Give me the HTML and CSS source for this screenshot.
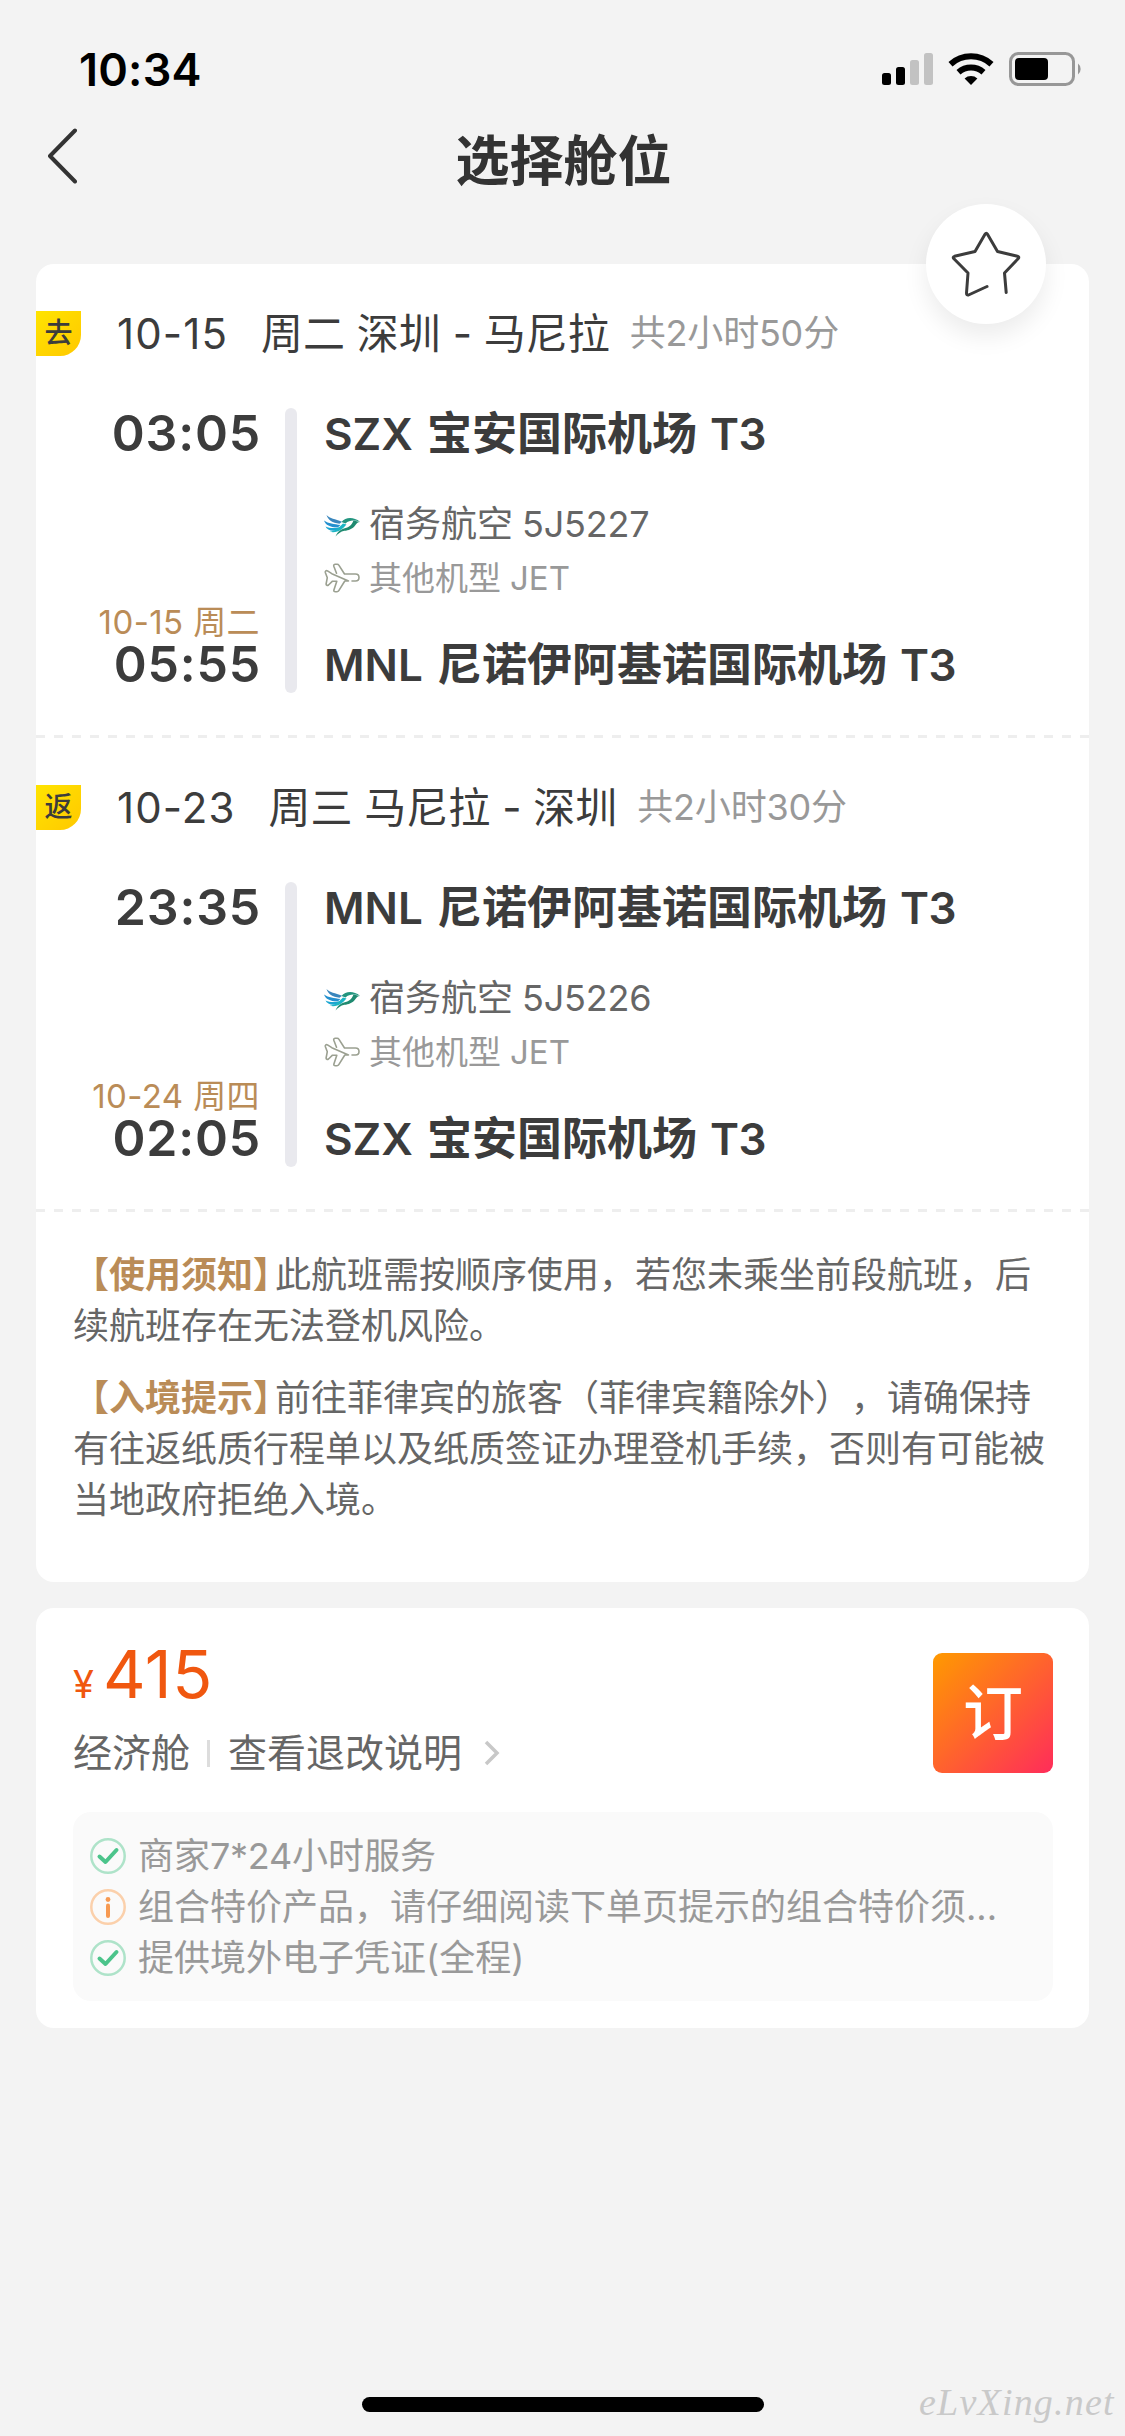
FILE: index.html
```html
<!DOCTYPE html>
<html lang="zh-CN">
<head>
<meta charset="utf-8">
<title>选择舱位</title>
<link rel="stylesheet" href="styles.css">
</head>
<body>
<svg width="0" height="0" class="sprite" aria-hidden="true">
  <symbol id="bird" viewBox="0 0 36 22">
    <path d="M2.500 0C6 3.500 11 4 18 6.800L15.500 8.800C8.500 7.800 4 5 2.500 0Z" fill="#3a86bd"/>
    <path d="M0 5.500C4.500 8.800 10 9 16.500 10L14 12.300C7 12.600 1.500 10.300 0 5.500Z" fill="#2490cf"/>
    <path d="M1.500 11.500C6 13.500 10.500 13.500 16 12.300L12.500 15.300C7.500 16.500 3 15 1.500 11.500Z" fill="#1ba6d2"/>
    <path d="M5.500 16.800C11 16.200 15 12.500 19 8.500L22.500 9.500C19 13.800 13.500 18.800 5.500 16.800Z" fill="#1cb5c4"/>
    <path d="M11.500 21.500C13.500 16 18 13.500 22.500 12.700C26.500 11.500 28 9 29.500 5.500L36 7C33.500 7.200 32.500 8.500 31.500 10C28.500 14.200 24.500 15.500 20.500 15.800C16.500 16.500 14 19 11.500 21.500Z" fill="#1f8a70"/>
    <path d="M17.500 7C21.500 2 29.500 1.500 36 6.800C30 5 25.500 5 21.500 8.500Z" fill="#23957f"/>
  </symbol>
  <symbol id="plane" viewBox="0 0 36 30">
    <path d="M12.500 10.200 9.800 3.200C9.400 1.800 10.200 1.300 11.200 1.300H13.200C14 1.300 14.500 1.700 15 2.400L20.500 11H31.500C34 11 35 12.800 35 14.500C35 16.500 33.800 18 31.500 18H28M24.500 18H20.800L14.800 27.700C14.300 28.500 13.800 28.700 13 28.700H11.300C10.200 28.700 9.500 28.200 9.900 27L12.800 18.200H8.500L4.500 22C3.300 22.800 2 22.300 2.100 21L3.300 14.700 1.300 9.500C1 8 2.200 7.300 3.500 7.900L7.800 10.700Z" fill="none" stroke="#9ba091" stroke-width="1.600" stroke-linejoin="round" stroke-linecap="round"/>
  </symbol>
  <symbol id="ok" viewBox="0 0 36 36">
    <circle cx="18" cy="18" r="16.700" fill="none" stroke="#aee3c9" stroke-width="2.500"/>
    <path d="M9.500 18.500 15.500 24 26.500 12" fill="none" stroke="#4cc48b" stroke-width="4" stroke-linecap="round" stroke-linejoin="round"/>
  </symbol>
  <symbol id="info" viewBox="0 0 36 36">
    <circle cx="18" cy="18" r="16.700" fill="none" stroke="#fbd0ab" stroke-width="2.500"/>
    <circle cx="18" cy="10.500" r="2.400" fill="#f79a52"/>
    <path d="M18 16.500V27" stroke="#f79a52" stroke-width="4" stroke-linecap="round"/>
  </symbol>
</svg>

<div class="screen">
  <div class="statusbar">
    <span class="clock">10:34</span>
    <svg class="status-icons" width="200" height="34" viewBox="0 0 200 34">
      <rect x="0" y="21" width="9" height="12" rx="2.500"/>
      <rect x="14" y="15" width="9" height="18" rx="2.500"/>
      <rect x="28" y="8" width="9" height="25" rx="2.500" fill="#c2c2c2"/>
      <rect x="42" y="1" width="9" height="32" rx="2.500" fill="#c2c2c2"/>
      <g fill="none" stroke="#000" stroke-width="6">
        <path d="M68.500 12.200A30.500 30.500 0 0 1 109.500 12.200"/>
        <path d="M76.500 20.200A19 19 0 0 1 101.500 20.200"/>
      </g>
      <path d="M82.600 26.400A10 10 0 0 1 95.400 26.400L89 33Z"/>
      <rect x="128.500" y="1.500" width="63" height="31" rx="8" fill="none" stroke="#979797" stroke-width="3"/>
      <rect x="133" y="6" width="33" height="22" rx="4"/>
      <path d="M196 11.500A7 7 0 0 1 196 22.500Z" fill="#979797"/>
    </svg>
  </div>

  <div class="navbar">
    <svg class="back" width="32" height="56" viewBox="0 0 32 56"><path d="M30 2.500 5 28 30 53.500" fill="none" stroke="#333" stroke-width="4" stroke-linecap="round" stroke-linejoin="round"/></svg>
    <h1 class="title">选择舱位</h1>
  </div>

  <div class="card trip">
    <div class="favorite">
      <svg width="120" height="120" viewBox="0 0 120 120"><path d="M80.200 88.500 78.500 69 92.300 54.500Q93.500 52.800 91.500 52.300L71.500 47.500 61.500 30.300Q60.300 28.300 59 30.300L49 47.500 28.500 52.300Q26.500 53 27.700 54.500L42 69 40.500 89Q40.500 91.500 42.500 91L61 82.500" fill="none" stroke="#3c3c3c" stroke-width="3" stroke-linecap="round" stroke-linejoin="round"/></svg>
    </div>

    <section class="leg">
      <div class="leg-head">
        <span class="tag">去</span>
        <span class="date">10-15</span>
        <span class="route">周二 深圳 - 马尼拉</span>
        <span class="duration">共2小时50分</span>
      </div>
      <div class="schedule">
        <div class="times">
          <span class="time">03:05</span>
          <div class="arrive"><span class="day">10-15 周二</span><span class="time">05:55</span></div>
        </div>
        <div class="rail"></div>
        <div class="stops">
          <div class="airport"><span class="code">SZX</span><span>宝安国际机场</span><span class="terminal">T3</span></div>
          <div class="airline"><svg width="36" height="22"><use href="#bird"/></svg><span>宿务航空</span><span class="flight">5J5227</span></div>
          <div class="model"><svg width="36" height="30"><use href="#plane"/></svg><span>其他机型</span><span class="jet">JET</span></div>
          <div class="airport last"><span class="code">MNL</span><span>尼诺伊阿基诺国际机场</span><span class="terminal">T3</span></div>
        </div>
      </div>
    </section>

    <section class="leg">
      <div class="leg-head">
        <span class="tag">返</span>
        <span class="date">10-23</span>
        <span class="route">周三 马尼拉 - 深圳</span>
        <span class="duration">共2小时30分</span>
      </div>
      <div class="schedule">
        <div class="times">
          <span class="time">23:35</span>
          <div class="arrive"><span class="day">10-24 周四</span><span class="time">02:05</span></div>
        </div>
        <div class="rail"></div>
        <div class="stops">
          <div class="airport"><span class="code">MNL</span><span>尼诺伊阿基诺国际机场</span><span class="terminal">T3</span></div>
          <div class="airline"><svg width="36" height="22"><use href="#bird"/></svg><span>宿务航空</span><span class="flight">5J5226</span></div>
          <div class="model"><svg width="36" height="30"><use href="#plane"/></svg><span>其他机型</span><span class="jet">JET</span></div>
          <div class="airport last"><span class="code">SZX</span><span>宝安国际机场</span><span class="terminal">T3</span></div>
        </div>
      </div>
    </section>

    <div class="notices">
      <p><strong>【使用须知</strong><strong class="close">】</strong>此航班需按顺序使用，若您未乘坐前段航班，后续航班存在无法登机风险。</p>
      <p><strong>【入境提示</strong><strong class="close">】</strong>前往菲律宾的旅客（菲律宾籍除外），请确保持有往返纸质行程单以及纸质签证办理登机手续，否则有可能被当地政府拒绝入境。</p>
    </div>
  </div>

  <div class="card fare">
    <div class="fare-top">
      <div class="fare-info">
        <div class="price"><span class="yen">¥</span><span class="amount">415</span></div>
        <div class="cabin">
          <span>经济舱</span><i class="divider"></i><span>查看退改说明</span>
          <svg width="17" height="28" viewBox="0 0 17 28"><path d="M3 3 14 14 3 25" fill="none" stroke="#c8c8c8" stroke-width="3.500"/></svg>
        </div>
      </div>
      <button class="book">订</button>
    </div>
    <ul class="services">
      <li><svg width="36" height="36"><use href="#ok"/></svg><span>商家<span class="hours">7*24</span>小时服务</span></li>
      <li><svg width="36" height="36"><use href="#info"/></svg><span>组合特价产品，请仔细阅读下单页提示的组合特价须...</span></li>
      <li><svg width="36" height="36"><use href="#ok"/></svg><span>提供境外电子凭证(全程)</span></li>
    </ul>
  </div>

  <div class="footer">
    <div class="home-indicator"></div>
    <span class="site">eLvXing.net</span>
  </div>
</div>
</body>
</html>
```
FILE: styles.css
```css
* { box-sizing: border-box; }
body {
  margin: 0;
  background: #f3f3f3;
  color: #3c3c3c;
  font-family: Inter, "Noto Sans CJK SC", sans-serif;
  text-spacing-trim: space-all;
}
.sprite { position: absolute; }
svg { display: block; flex: none; }
.screen {
  width: 1125px;
  height: 2436px;
  display: flex;
  flex-direction: column;
  overflow: hidden;
}

.statusbar {
  height: 104px;
  padding: 35px 43px 0 79px;
  display: flex;
  justify-content: space-between;
}
.clock {
  height: 69px;
  font-size: 45px;
  line-height: 69px;
  font-weight: 600;
  letter-spacing: .2px;
  color: #000;
}
.status-icons { margin-top: 17px; }

.navbar {
  height: 160px;
  padding: 25px 45px 0 46px;
  display: grid;
  grid-template-columns: 32px 1fr 32px;
}
.back { margin: -1px 0 0 -1px; }
.title {
  margin: 0;
  height: 66px;
  line-height: 66px;
  padding-left: 1px;
  text-align: center;
  font-size: 54px;
  font-weight: 700;
  color: #333;
}

.card {
  position: relative;
  margin: 0 36px;
  background: #fff;
  border-radius: 18px;
}
.favorite {
  position: absolute;
  top: -60px;
  right: 43px;
  width: 120px;
  height: 120px;
  border-radius: 50%;
  background: #fff;
  box-shadow: 0 12px 24px rgba(0, 0, 0, .08);
}

.leg {
  height: 474px;
  padding-top: 47px;
  background: repeating-linear-gradient(90deg, #eee 0 9px, transparent 9px 18px) 0 100% / 100% 3px no-repeat;
}
.leg-head {
  height: 45px;
  display: flex;
  line-height: 45px;
  font-size: 42px;
  white-space: nowrap;
}
.tag {
  width: 45px;
  margin-right: 36px;
  text-align: center;
  font-size: 28px;
  font-weight: 500;
  background: linear-gradient(135deg, #ffe400, #ffc800);
  border-bottom-right-radius: 21px;
}
.date { margin-right: 33px; letter-spacing: 1.1px; }
.duration { margin-left: 20px; font-size: 36px; letter-spacing: -.2px; color: #999; }

.schedule {
  height: 285px;
  margin-top: 52px;
  display: flex;
}
.times {
  width: 225px;
  padding-bottom: 4px;
  display: flex;
  flex-direction: column;
  justify-content: space-between;
  align-items: flex-end;
}
.arrive { display: flex; flex-direction: column; align-items: flex-end; }
.time { font-size: 50px; line-height: 50px; font-weight: 600; letter-spacing: .8px; }
.day { margin-right: 1px; font-size: 33px; line-height: 33px; letter-spacing: .4px; color: #ba8c57; white-space: nowrap; }
.rail { width: 12px; margin: 0 27px 0 24px; border-radius: 6px; background: #e9e9ee; }
.airport {
  margin-top: 1px;
  display: flex;
  font-size: 45px;
  line-height: 50px;
  font-weight: 700;
  white-space: nowrap;
}
.code, .terminal { font-size: 44px; font-weight: 600; }
.code { margin-right: 14px; }
.terminal { margin-left: 13px; letter-spacing: -.5px; }
.airline, .model { display: flex; align-items: center; line-height: 50px; white-space: nowrap; }
.airline { margin-top: 40px; font-size: 36px; color: #666; }
.model { margin-top: 4px; font-size: 33px; color: #999; }
.airline svg, .model svg { margin-right: 9px; }
.airline svg { margin-top: 3px; }
.airport.last { margin-top: 37px; }
.flight, .jet { margin-left: 9px; }
.flight { letter-spacing: -.2px; }

.notices {
  height: 370px;
  padding: 38px 36px 0 37px;
  font-size: 36px;
  line-height: 51px;
  color: #666;
}
.notices p { margin: 0 0 21px; }
.notices strong { font-weight: 700; color: #ba8c57; }
.notices .close { margin-right: 4px; font-feature-settings: "halt"; }

.fare { height: 420px; margin-top: 26px; padding: 36px 36px 0 37px; }
.fare-top { display: flex; justify-content: space-between; height: 168px; }
.price { display: flex; align-items: baseline; height: 79px; line-height: 60px; color: #f0570f; }
.yen { font-size: 38px; margin-right: 9px; }
.amount { font-size: 66px; letter-spacing: .6px; }
.cabin { display: flex; align-items: center; height: 60px; font-size: 39px; line-height: 60px; color: #666; }
.divider { width: 3px; height: 27px; margin: 0 18px 0 17px; background: #ddd; }
.cabin svg { margin-left: 21px; }
.book {
  width: 120px;
  height: 120px;
  margin-top: 9px;
  padding: 0;
  border: 0;
  border-radius: 9px;
  background: linear-gradient(135deg, #ff9a00, #ff2c5a);
  color: #fff;
  font: 500 60px/118px Inter, "Noto Sans CJK SC", sans-serif;
}
.services {
  list-style: none;
  margin: 0;
  height: 189px;
  padding: 18px 17px;
  border-radius: 18px;
  background: #fafafa;
  font-size: 36px;
  line-height: 51px;
  color: #999;
}
.services li { display: flex; align-items: center; height: 51px; white-space: nowrap; }
.services svg { margin-right: 12px; }
.services li > span { padding-top: 2px; }
.hours { letter-spacing: -.3px; }

.footer { position: relative; margin-top: auto; height: 60px; }
.home-indicator { width: 402px; height: 15px; margin: 21px auto 0; border-radius: 8px; background: #000; }
.site {
  position: absolute;
  left: 919px;
  top: 2px;
  font: italic 38px/48px "Liberation Serif", serif;
  letter-spacing: 1.2px;
  color: #c9c9c9;
}
```
